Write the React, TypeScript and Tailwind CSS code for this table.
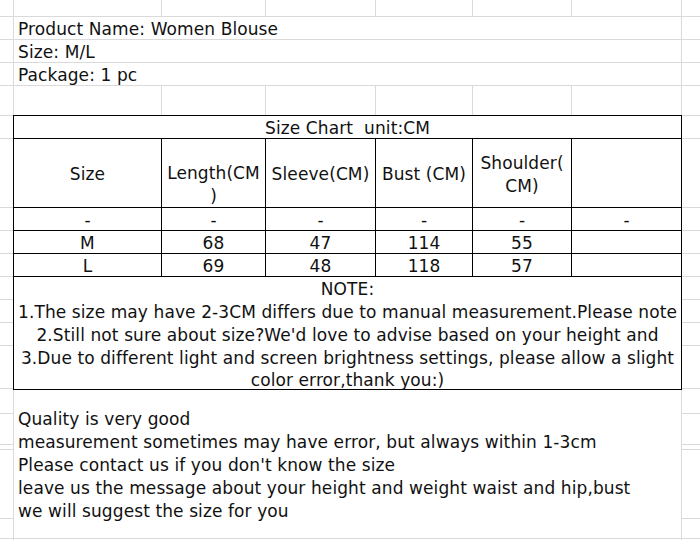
const G = 'border-[#dadada]';
const colW = ['w-[148px]', 'w-[104px]', 'w-[110px]', 'w-[97px]', 'w-[99px]', 'w-[110px]'];

function Band({ h, split, children }: { h: string; split?: boolean; children?: React.ReactNode }) {
  return (
    <div className={`flex ${h} border-b ${G}`}>
      <div className={`w-[14px] shrink-0 border-r ${G}`} />
      {split ? (
        <div className="flex w-[668px] shrink-0">
          {colW.map((w, i) => (
            <div key={i} className={`${w} h-full border-r ${G}`} />
          ))}
        </div>
      ) : (
        <div className={`w-[668px] shrink-0 border-r ${G} flex items-center pl-1 pt-[3px] whitespace-nowrap`}>{children}</div>
      )}
      <div className="flex-1" />
    </div>
  );
}

const sideRows = ['h-[23px]', 'h-[69px]', 'h-[23px]', 'h-[23px]', 'h-[23px]', 'h-[23px]', 'h-[23px]', 'h-[23px]', 'h-[43px]'];

function TableGutter({ w }: { w: string }) {
  return (
    <div className={`${w} border-t ${G}`}>
      {sideRows.map((h, i) => (
        <div key={i} className={`${h} border-b ${G}`} />
      ))}
    </div>
  );
}

const bottomRows = ['h-[24px]', 'h-[31px]', 'h-[5px]', 'h-[69px]', 'h-[20px]'];

function BottomGutter({ w }: { w: string }) {
  return (
    <div className={w}>
      {bottomRows.map((h, i) => (
        <div key={i} className={`${h} border-b ${G}`} />
      ))}
    </div>
  );
}

const rows = [
  ['-', '-', '-', '-', '-', '-'],
  ['M', '68', '47', '114', '55', ''],
  ['L', '69', '48', '118', '57', ''],
];

export default function App() {
  return (
    <div className="w-[700px] h-[540px] overflow-hidden bg-white text-[#111] text-[17px] tracking-[0.1px] font-['DejaVu_Sans',Verdana,sans-serif]">
      <Band h="h-[17px]" split />
      <Band h="h-[23px]">Product Name: Women Blouse</Band>
      <Band h="h-[23px]">Size: M/L</Band>
      <Band h="h-[23px]">Package: 1 pc</Band>
      <div className="flex h-[29px]">
        <div className={`w-[14px] shrink-0 border-r ${G}`} />
        <div className="flex w-[668px] shrink-0">
          {colW.map((w, i) => (
            <div key={i} className={`${w} h-full border-r ${G}`} />
          ))}
        </div>
      </div>

      {/* size chart */}
      <div className="flex">
        <TableGutter w="w-[13px] shrink-0" />
        <div className="w-[669px] shrink-0 border-t border-l border-black">
          <div className="h-[23px] border-b border-r border-black flex items-center justify-center pt-[3px] whitespace-pre">
            Size Chart  unit:CM
          </div>
          <div className="flex h-[69px] border-b border-black">
            <div className={`${colW[0]} border-r border-black flex items-center justify-center pt-[3px]`}>Size</div>
            <div className={`${colW[1]} border-r border-black text-center leading-[23px] pt-[23px]`}>
              Length(CM
              <br />)
            </div>
            <div className={`${colW[2]} border-r border-black flex items-center justify-center pt-[3px]`}>Sleeve(CM)</div>
            <div className={`${colW[3]} border-r border-black flex items-center justify-center pt-[3px]`}>Bust (CM)</div>
            <div className={`${colW[4]} border-r border-black flex items-center justify-center text-center leading-[23px] pt-[3px]`}>
              Shoulder(
              <br />
              CM)
            </div>
            <div className={`${colW[5]} border-r border-black`} />
          </div>
          {rows.map((r, i) => (
            <div key={i} className="flex h-[23px] border-b border-black">
              {r.map((c, j) => (
                <div key={j} className={`${colW[j]} border-r border-black flex items-center justify-center pt-[3px]`}>
                  {c}
                </div>
              ))}
            </div>
          ))}
          <div className="border-r border-b border-black text-center whitespace-nowrap leading-[23px] pt-px">
            <div className="h-[23px]">NOTE:</div>
            <div className="h-[23px]">1.The size may have 2-3CM differs due to manual measurement.Please note</div>
            <div className="h-[23px]">2.Still not sure about size?We'd love to advise based on your height and</div>
            <div className="h-[42px] leading-[22px]">
              <div>3.Due to different light and screen brightness settings, please allow a slight</div>
              <div>color error,thank you:)</div>
            </div>
          </div>
        </div>
        <TableGutter w="flex-1" />
      </div>

      {/* notes below */}
      <div className="flex">
        <BottomGutter w={`w-[14px] shrink-0 border-r ${G}`} />
        <div className={`w-[668px] h-[149px] shrink-0 border-r border-b ${G} pl-1 pt-[18px] leading-[23px] whitespace-nowrap`}>
          <div>Quality is very good</div>
          <div>measurement sometimes may have error, but always within 1-3cm</div>
          <div>Please contact us if you don't know the size</div>
          <div>leave us the message about your height and weight waist and hip,bust</div>
          <div>we will suggest the size for you</div>
        </div>
        <BottomGutter w="flex-1" />
      </div>
      <div className="flex h-[3px]">
        <div className={`w-[14px] border-r ${G}`} />
        <div className={`w-[668px] border-r ${G}`} />
      </div>
    </div>
  );
}
